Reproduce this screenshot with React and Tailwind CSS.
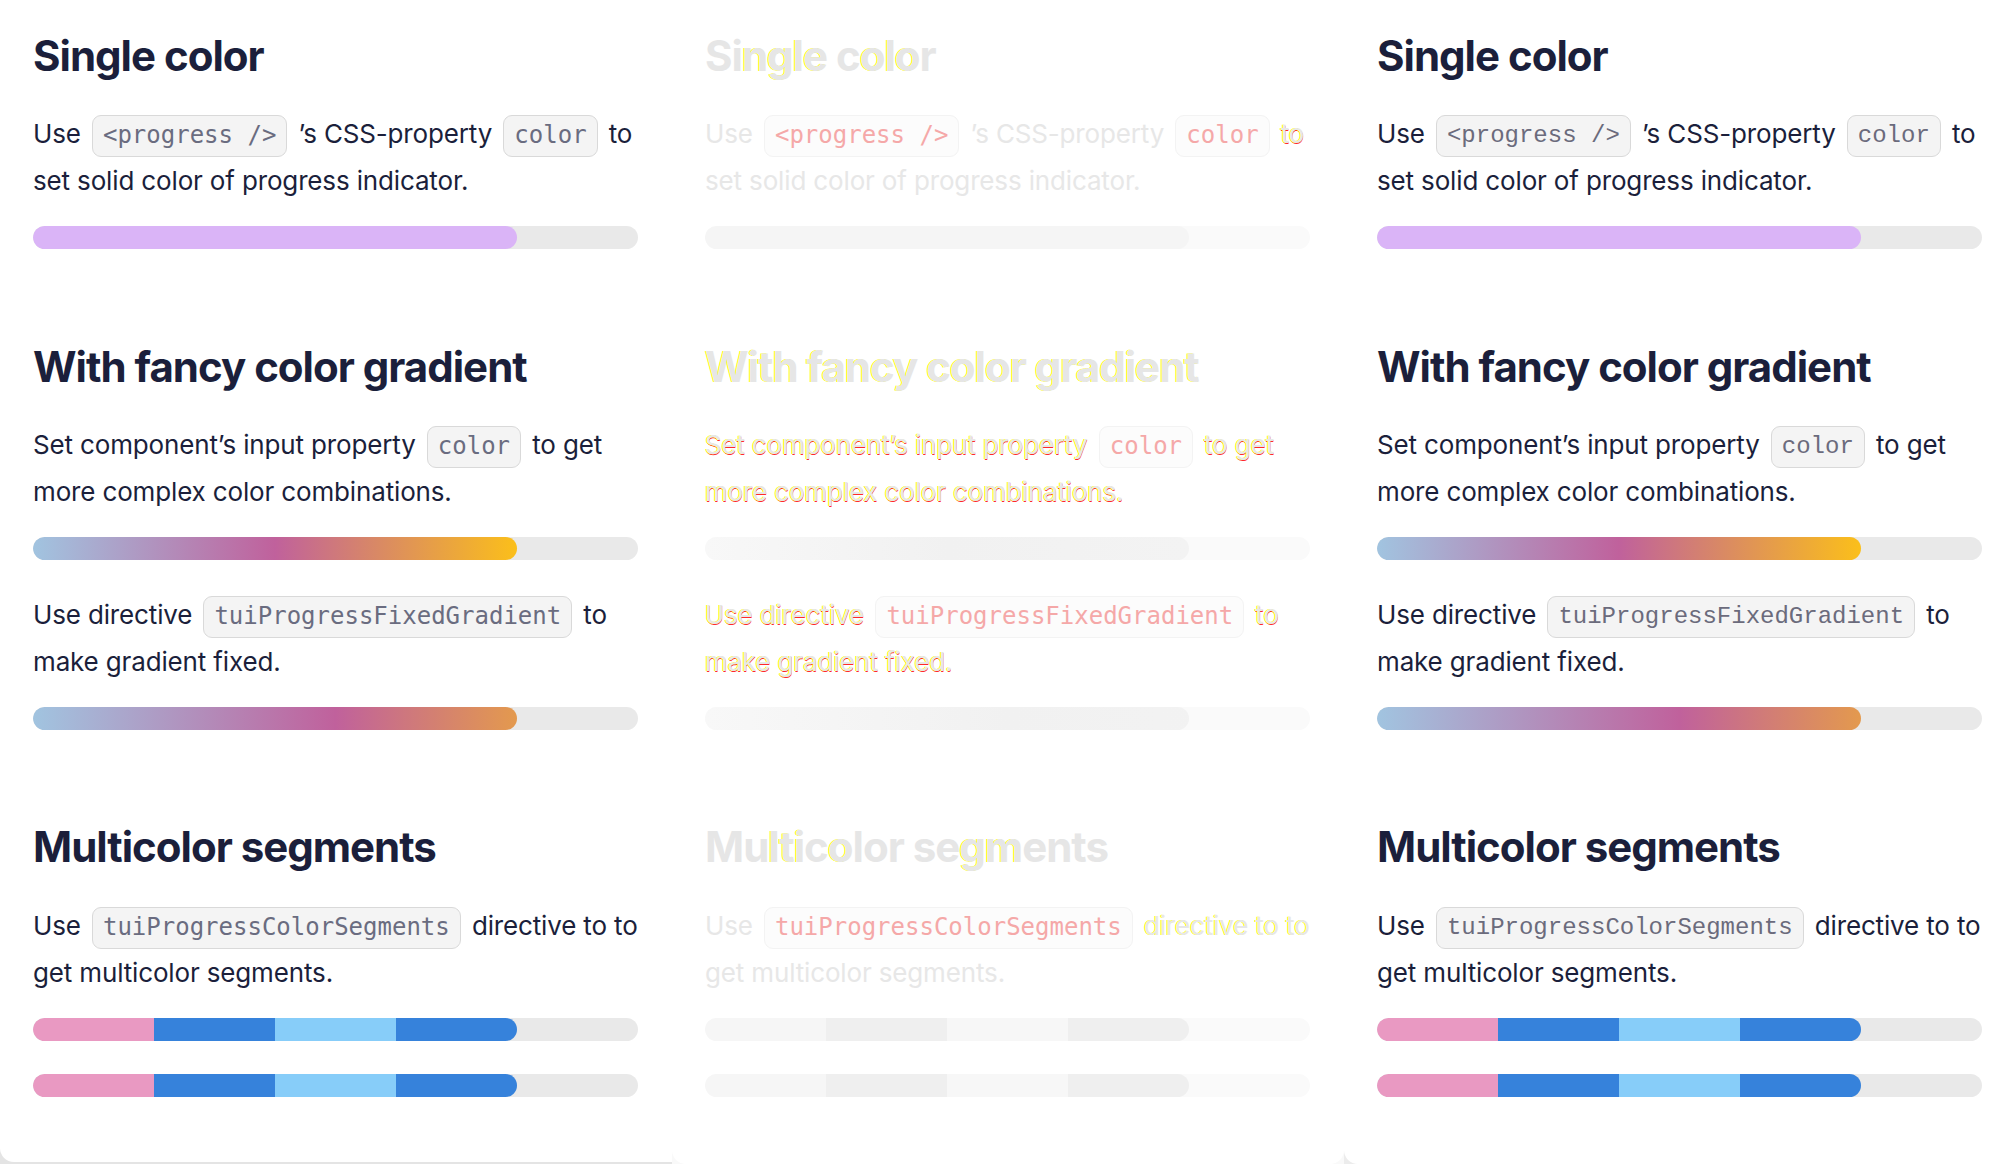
import React from 'react';

const BODY = "font-['Inter','Noto_Sans',sans-serif]";
const Y = "[text-shadow:-1px_0_0_#ffff00]";
const YR = "[text-shadow:-1px_0_0_#ffff00,0_1px_0_#ff2a2a]";

function Code({ v, children }) {
  if (v === 'diff') {
    return (
      <span className="inline-block align-middle h-[42px] leading-[39px] px-[10px] mx-[4px] rounded-[9px] border-[1.5px] border-[#f3f3f3] bg-[#fcfcfc] text-[24px] tracking-normal [text-shadow:none] font-['DejaVu_Sans_Mono',monospace] text-[#f5a8a8]">
        {children}
      </span>
    );
  }
  const font = v === 'ref' ? "font-['DejaVu_Sans_Mono',monospace] text-[#6a6c80]" : "font-['Liberation_Mono',monospace] text-[#6b6b7c]";
  return (
    <span className={`inline-block align-middle h-[42px] leading-[39px] px-[10px] mx-[4px] rounded-[9px] border-[1.5px] border-[#d9d9d9] bg-[#f4f4f4] text-[24px] tracking-normal ${font}`}>
      {children}
    </span>
  );
}

function Heading({ v, className = '', children }) {
  const color = v === 'diff' ? 'text-[#e6e6e6]' : 'text-[#1b1f3b]';
  return (
    <div className={`h-[56px] leading-[56px] text-[42px] font-bold tracking-[-1px] whitespace-nowrap ${color} ${className}`}>
      {children}
    </div>
  );
}

function P({ v, className = '', children }) {
  const color = v === 'diff' ? 'text-[#e7e7e7]' : 'text-[#1b1f3b]';
  return (
    <div className={`text-[26px] leading-[47px] tracking-[-0.15px] whitespace-nowrap ${color} ${className}`}>
      {children}
    </div>
  );
}

function Track({ v, className = '', children }) {
  const bg = v === 'diff' ? 'bg-[#fafafa]' : 'bg-[#e9e9e9]';
  return <div className={`h-[23px] w-[605px] rounded-full overflow-hidden ${bg} ${className}`}>{children}</div>;
}

function SingleBar({ v, className }) {
  return (
    <Track v={v} className={className}>
      <div className={`h-full w-[80%] rounded-full ${v === 'diff' ? 'bg-[#f5f5f5]' : 'bg-[#dab4f7]'}`} />
    </Track>
  );
}

function GradientBar({ v, className }) {
  const g = v === 'diff'
    ? 'bg-[linear-gradient(to_right,#f8f8f8,#f1f1f1,#f3f3f3)]'
    : 'bg-[linear-gradient(to_right,#a1c4e0,#c0619c,#fbbf1a)]';
  return (
    <Track v={v} className={className}>
      <div className={`h-full w-[80%] rounded-full ${g}`} />
    </Track>
  );
}

function FixedBar({ v, className }) {
  const g = v === 'diff'
    ? 'bg-[linear-gradient(to_right,#f8f8f8,#f1f1f1,#f3f3f3)]'
    : 'bg-[linear-gradient(to_right,#a1c4e0,#c0619c,#fbbf1a)]';
  return (
    <Track v={v} className={className}>
      <div className="h-full w-[80%] rounded-full overflow-hidden">
        <div className={`h-full w-[605px] ${g}`} />
      </div>
    </Track>
  );
}

function SegBar({ v, className }) {
  const c = v === 'diff'
    ? ['bg-[#f6f6f6]', 'bg-[#efefef]', 'bg-[#f7f7f7]', 'bg-[#efefef]']
    : ['bg-[#e999c2]', 'bg-[#3682db]', 'bg-[#87cdf9]', 'bg-[#3682db]'];
  return (
    <Track v={v} className={className}>
      <div className="h-full w-[80%] rounded-full overflow-hidden flex">
        <div className={`h-full flex-1 ${c[0]}`} />
        <div className={`h-full flex-1 ${c[1]}`} />
        <div className={`h-full flex-1 ${c[2]}`} />
        <div className={`h-full flex-1 ${c[3]}`} />
      </div>
    </Track>
  );
}

function Column({ v }) {
  const d = v === 'diff';
  return (
    <div className={`pt-[28px] pl-[33px] ${BODY}`}>
      <Heading v={v}>
        {d ? (<>Si<span className={Y}>ngle</span> c<span className={Y}>olo</span>r</>) : 'Single color'}
      </Heading>
      <P v={v} className="mt-[26px]">
        Use <Code v={v}>&lt;progress /&gt;</Code> ’s CSS-property <Code v={v}>color</Code>{' '}
        {d ? <span className={YR}>to</span> : 'to'}
        <br />
        set solid color of progress indicator.
      </P>
      <SingleBar v={v} className="mt-[22px]" />

      <Heading v={v} className={`mt-[90px] ${d ? Y : ''}`}>With fancy color gradient</Heading>
      <P v={v} className={`mt-[26px] ${d ? YR : ''}`}>
        Set component’s input property <Code v={v}>color</Code> to get
        <br />
        more complex color combinations.
      </P>
      <GradientBar v={v} className="mt-[22px]" />
      <P v={v} className={`mt-[31px] ${d ? YR : ''}`}>
        Use directive <Code v={v}>tuiProgressFixedGradient</Code> to
        <br />
        make gradient fixed.
      </P>
      <FixedBar v={v} className="mt-[22px]" />

      <Heading v={v} className="mt-[89px]">
        {d ? (<>Mu<span className={Y}>lti</span>c<span className={Y}>o</span>lor se<span className={Y}>gm</span>ents</>) : 'Multicolor segments'}
      </Heading>
      <P v={v} className="mt-[27px]">
        Use <Code v={v}>tuiProgressColorSegments</Code>{' '}
        {d ? <span className={Y}>directive to to</span> : 'directive to to'}
        <br />
        get multicolor segments.
      </P>
      <SegBar v={v} className="mt-[22px]" />
      <SegBar v={v} className="mt-[33px]" />
    </div>
  );
}

export default function App() {
  return (
    <div className="w-[2016px] h-[1164px] flex bg-white overflow-hidden">
      <div className="w-[672px] h-full shrink-0 bg-[#e4e4e4]">
        <div className="h-[1162px] bg-white rounded-bl-[14px]">
          <Column v="ref" />
        </div>
      </div>
      <div className="w-[672px] h-full shrink-0 bg-[#f9f9f9]">
        <div className="h-full bg-white rounded-b-[14px]">
          <Column v="diff" />
        </div>
      </div>
      <div className="w-[672px] h-full shrink-0 bg-[#ececec]">
        <div className="h-full bg-white rounded-bl-[14px]">
          <Column v="render" />
        </div>
      </div>
    </div>
  );
}
